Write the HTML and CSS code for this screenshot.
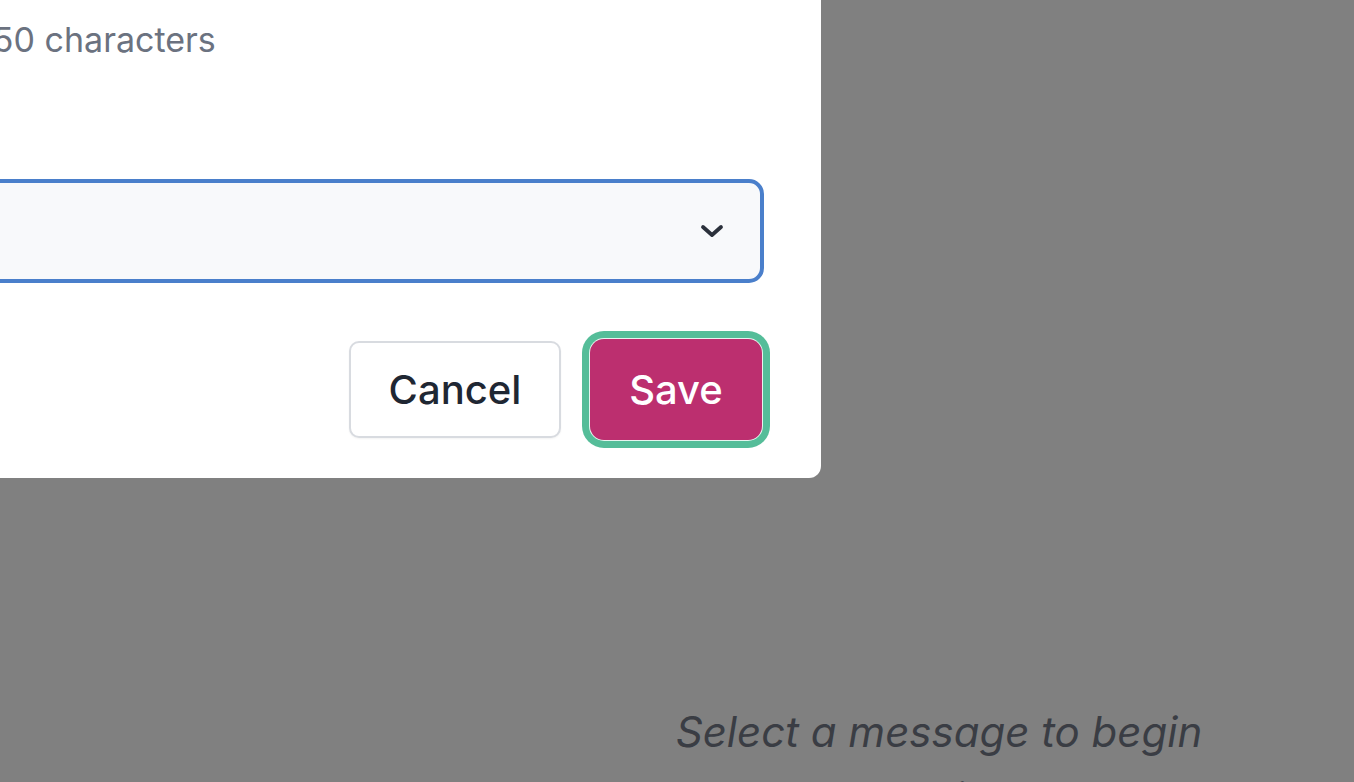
FILE: index.html
```html
<!DOCTYPE html>
<html lang="en">
<head>
    <meta charset="UTF-8">
    <meta name="viewport" content="width=device-width, initial-scale=1.0">
    <title>Inbox - Edit folder</title>
    <link rel="stylesheet" href="styles.css">
</head>
<body>
    <!-- Page behind the overlay -->
    <main class="inbox">
        <p class="empty-state">Select a message to begin reading</p>
    </main>

    <!-- Edit dialog -->
    <div class="modal">
        <p class="hint">Maximum 50 characters</p>

        <div class="select-box">
            <span class="select-value"></span>
            <svg class="chevron" width="24" height="14" viewBox="0 0 24 14">
                <path d="M3 3 L12 11 L21 3" fill="none" stroke="#2b303b" stroke-width="3.8" stroke-linecap="round" stroke-linejoin="round"/>
            </svg>
        </div>

        <div class="actions">
            <button class="btn btn-cancel">Cancel</button>
            <button class="btn btn-save">Save</button>
        </div>
    </div>
</body>
</html>
```

FILE: styles.css
```css
body {
    margin: 0;
    height: 782px;
    overflow: hidden;
    background-color: #808080;
    font-family: Inter, "Noto Sans", sans-serif;
    position: relative;
}
.inbox {
    padding: 699px 0 0 524px;
}
.empty-state {
    margin: 0 auto;
    max-width: 560px;
    text-align: center;
    font-size: 42px;
    line-height: 66px;
    font-style: italic;
    color: #3a3d44;
}
.modal {
    position: absolute;
    top: 0;
    left: -230px;
    width: 1051px;
    box-sizing: border-box;
    padding: 0 57px 38px;
    background-color: white;
    border-bottom-right-radius: 12px;
}
.hint {
    margin: 0;
    padding-top: 15px;
    font-size: 34px;
    line-height: 50px;
    color: #6b7280;
}
.select-box {
    margin-top: 114px;
    height: 104px;
    box-sizing: border-box;
    display: flex;
    align-items: center;
    justify-content: space-between;
    padding-right: 36px;
    border: 4px solid #4a7fcb;
    border-radius: 15px;
    background-color: #f8f9fb;
}
.chevron {
    display: block;
}
.actions {
    margin-top: 56px;
    padding-right: 2px;
    display: flex;
    justify-content: flex-end;
    align-items: center;
    gap: 29px;
}
.btn {
    font-family: Inter, "Noto Sans", sans-serif;
    font-size: 40px;
    font-weight: 500;
    cursor: pointer;
    box-sizing: border-box;
}
.btn-cancel {
    width: 212px;
    height: 97px;
    border: 2px solid #d8dbe0;
    border-radius: 10px;
    background-color: white;
    color: #1f2733;
    box-shadow: 0 1px 2px rgba(0,0,0,0.05);
}
.btn-save {
    width: 172px;
    height: 101px;
    border: none;
    border-radius: 14px;
    background-color: #bc2f6f;
    color: white;
    box-shadow: 0 0 0 1px #e6f5ef, 0 0 0 8px #55bd99;
}
```
